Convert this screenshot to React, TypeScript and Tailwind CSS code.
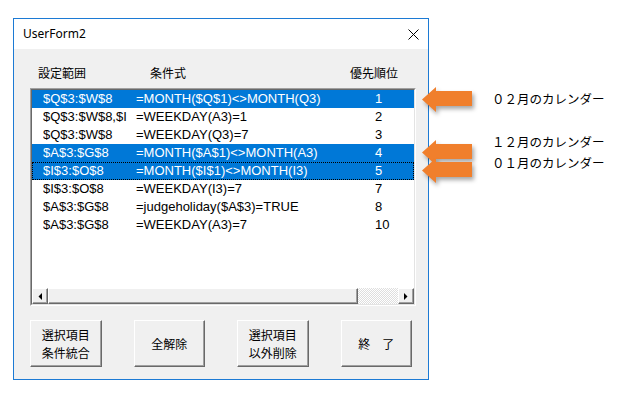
import React from "react";

type Row = { range: string; formula: string; order: string; selected?: boolean; focus?: boolean };

const rows: Row[] = [
  { range: "$Q$3:$W$8", formula: "=MONTH($Q$1)<>MONTH(Q3)", order: "1", selected: true },
  { range: "$Q$3:$W$8,$I", formula: "=WEEKDAY(A3)=1", order: "2" },
  { range: "$Q$3:$W$8", formula: "=WEEKDAY(Q3)=7", order: "3" },
  { range: "$A$3:$G$8", formula: "=MONTH($A$1)<>MONTH(A3)", order: "4", selected: true },
  { range: "$I$3:$O$8", formula: "=MONTH($I$1)<>MONTH(I3)", order: "5", selected: true, focus: true },
  { range: "$I$3:$O$8", formula: "=WEEKDAY(I3)=7", order: "7" },
  { range: "$A$3:$G$8", formula: "=judgeholiday($A$3)=TRUE", order: "8" },
  { range: "$A$3:$G$8", formula: "=WEEKDAY(A3)=7", order: "10" },
];

const jp = "font-['Noto_Sans_CJK_JP','Noto_Sans',sans-serif]";

function Arrow({ top }: { top: number }) {
  // left-pointing block arrow, 51x26
  return (
    <svg
      width="54"
      height="30"
      viewBox="0 0 54 30"
      className="absolute left-[421px] drop-shadow-[2px_3px_2px_rgba(0,0,0,0.35)]"
      style={{ top }}
    >
      <polygon points="1,12.5 15,0 15,4 51,4 51,19 15,19 15,25" fill="#f07f2c" />
    </svg>
  );
}

function ScrollButton({ dir }: { dir: "left" | "right" }) {
  return (
    <div className="flex h-[16px] w-[16px] items-center justify-center border border-t-white border-l-white border-r-[#696969] border-b-[#696969] bg-[#f0f0f0] shadow-[inset_-1px_-1px_0_#a0a0a0]">
      <svg width="4" height="7" viewBox="0 0 4 7">
        {dir === "left" ? (
          <polygon points="4,0 4,7 0.5,3.5" fill="#000" />
        ) : (
          <polygon points="0,0 0,7 3.5,3.5" fill="#000" />
        )}
      </svg>
    </div>
  );
}

function FormButton({ lines }: { lines: string[] }) {
  return (
    <button className="flex h-[47px] w-[72px] flex-col items-center justify-center border border-t-white border-l-white border-r-[#696969] border-b-[#696969] bg-[#f0f0f0] text-[12px] leading-[18px] text-black shadow-[inset_-1px_-1px_0_#a0a0a0]">
      {lines.map((l) => (
        <span key={l} className="whitespace-pre">
          {l}
        </span>
      ))}
    </button>
  );
}

export default function App() {
  return (
    <div className={`relative h-[397px] w-[623px] overflow-hidden bg-white ${jp}`}>
      <div className="pl-[13px] pt-[18px]">
        <div className="flex h-[362px] w-[416px] flex-col border border-[#1c7ad4] bg-[#f0f0f0]">
          <div className="flex h-[30px] items-center justify-between bg-white pl-[9px] pr-[9px]">
            <span className="font-['Noto_Sans',sans-serif] text-[12px] text-black">UserForm2</span>
            <svg width="11" height="11" viewBox="0 0 11 11">
              <path d="M0.5 0.5 L10.5 10.5 M10.5 0.5 L0.5 10.5" stroke="#000" strokeWidth="1" />
            </svg>
          </div>

          <div className="flex flex-col px-[16px]">
            <div className="relative mt-[16px] flex h-[16px] items-center text-[12px] text-black">
              <span className="ml-[8px] w-[112px]">設定範囲</span>
              <span className="w-[200px]">条件式</span>
              <span>優先順位</span>
            </div>

            <div className="mt-[7px] h-[218px] w-[386px] border border-t-[#a0a0a0] border-l-[#a0a0a0] border-r-white border-b-white">
              <div className="flex h-full flex-col border border-t-[#696969] border-l-[#696969] border-r-[#e3e3e3] border-b-[#e3e3e3] bg-white">
                <div className="flex-1 font-['Liberation_Sans',sans-serif] text-[13px]">
                  {rows.map((r, i) => (
                    <div
                      key={i}
                      className={`flex h-[18px] items-center ${
                        r.selected ? "bg-[#0078d7] text-white" : "text-black"
                      } ${r.focus ? "outline-1 -outline-offset-1 outline-dotted outline-black" : ""}`}
                    >
                      <span className="ml-[11px] w-[93px] overflow-hidden whitespace-nowrap">{r.range}</span>
                      <span className="w-[239px] whitespace-nowrap">{r.formula}</span>
                      <span>{r.order}</span>
                    </div>
                  ))}
                </div>
                <div className="flex h-[16px] items-stretch">
                  <ScrollButton dir="left" />
                  <div className="h-[16px] w-[310px] border border-t-white border-l-white border-r-[#696969] border-b-[#696969] bg-[#f0f0f0] shadow-[inset_-1px_-1px_0_#a0a0a0]" />
                  <div className="flex-1 bg-[repeating-conic-gradient(#dedede_0%_25%,#ffffff_0%_50%)] bg-[length:2px_2px]" />
                  <ScrollButton dir="right" />
                </div>
              </div>
            </div>

            <div className="mt-[14px] flex gap-[32px]">
              <FormButton lines={["選択項目", "条件統合"]} />
              <FormButton lines={["全解除"]} />
              <FormButton lines={["選択項目", "以外削除"]} />
              <FormButton lines={["終　了"]} />
            </div>
          </div>
        </div>
      </div>

      <Arrow top={87} />
      <Arrow top={140} />
      <Arrow top={158} />

      <span className="absolute left-[492px] top-[91px] text-[12.5px] leading-[16px] text-black">０２月のカレンダー</span>
      <span className="absolute left-[492px] top-[134px] text-[12.5px] leading-[16px] text-black">１２月のカレンダー</span>
      <span className="absolute left-[492px] top-[155px] text-[12.5px] leading-[16px] text-black">０１月のカレンダー</span>
    </div>
  );
}
